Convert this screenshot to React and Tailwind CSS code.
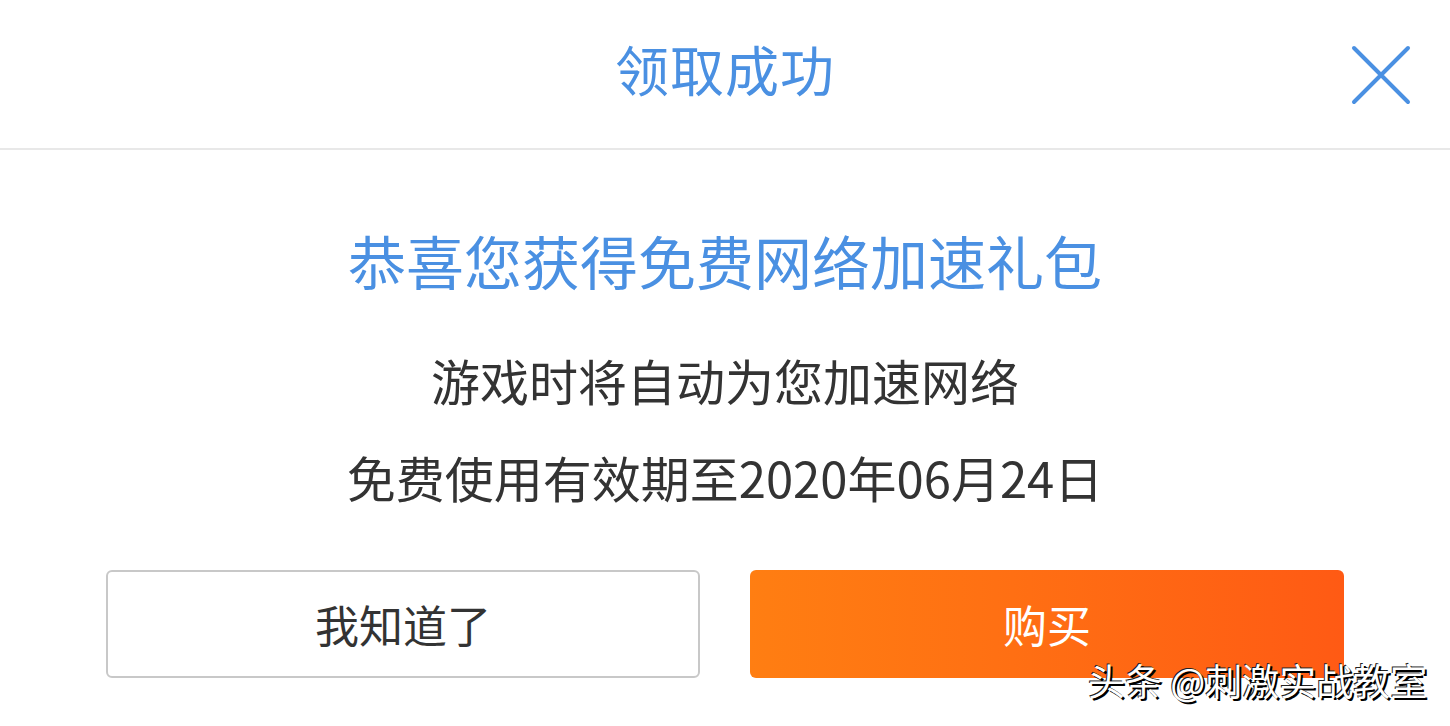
import React from "react";

const font = { fontFamily: '"Noto Sans CJK SC", "Noto Sans", sans-serif' };

const App = () => {
  return (
    <div
      className="relative w-[1450px] h-[726px] bg-white overflow-hidden"
      style={font}
    >
      {/* header */}
      <div className="relative h-[150px] border-b-2 border-[#e8e8e8] flex items-center justify-center">
        <h1 className="text-[54px] leading-none text-[#4a90e2] tracking-[1px] -mt-[10px]">
          领取成功
        </h1>
        <button className="absolute right-[38px] top-[44px] w-[62px] h-[62px] flex items-center justify-center">
          <svg width="60" height="60" viewBox="0 0 60 60">
            <path
              d="M3 3 L57 57 M57 3 L3 57"
              stroke="#4a90e2"
              strokeWidth="4"
              strokeLinecap="round"
            />
          </svg>
        </button>
      </div>

      {/* body */}
      <div className="flex flex-col items-center">
        <p className="mt-[75px] text-[58px] leading-[70px] text-[#4a90e2]">
          恭喜您获得免费网络加速礼包
        </p>
        <p className="mt-[56px] text-[49px] leading-[58px] text-[#333333]">
          游戏时将自动为您加速网络
        </p>
        <p className="mt-[39px] text-[49px] leading-[58px] text-[#333333]">
          免费使用有效期至2020年06月24日
        </p>
        <div className="mt-[64px] flex gap-[50px]">
          <button className="w-[594px] h-[108px] rounded-[6px] border-2 border-[#c8c8c8] bg-white text-[44px] text-[#333333]">
            我知道了
          </button>
          <button className="w-[594px] h-[108px] rounded-[6px] bg-gradient-to-r from-[#ff7e12] to-[#ff5a14] text-[44px] text-white">
            购买
          </button>
        </div>
      </div>

      {/* watermark */}
      <div className="absolute left-[1088px] top-[652px] text-[37px] leading-[56px] text-white [text-shadow:2px_2px_0_#000,-1px_-1px_0_#222]">
        头条 @刺激实战教室
      </div>
    </div>
  );
};

export default App;
